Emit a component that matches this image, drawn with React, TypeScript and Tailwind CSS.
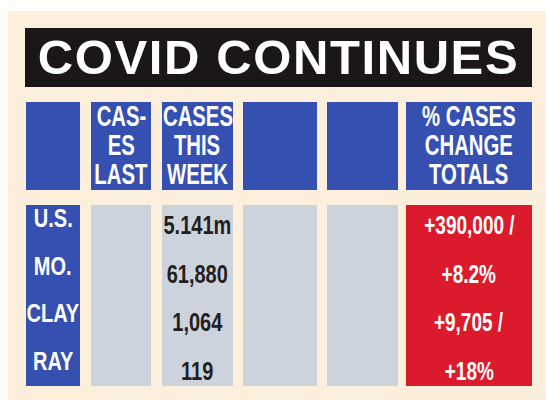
const sans = "font-['Liberation_Sans',Arial,sans-serif] font-bold";

const rows = [
  { label: 'U.S.', cases: '5.141m', change: '+390,000 /' },
  { label: 'MO.', cases: '61,880', change: '+8.2%' },
  { label: 'CLAY', cases: '1,064', change: '+9,705 /' },
  { label: 'RAY', cases: '119', change: '+18%' },
];

const cols = ['w-[54px]', 'w-[60px]', 'w-[71px]', 'w-[74px]', 'w-[71px]', 'w-[126px]'];

// condensed look: Liberation Sans squeezed horizontally
function Narrow({ children, scale }: { children: string; scale: string }) {
  return <span className={`inline-block whitespace-nowrap ${scale}`}>{children}</span>;
}

function HeaderCell({ w, lines }: { w: string; lines?: string[] }) {
  return (
    <div className={`${w} bg-[#3650b2] flex flex-col items-center justify-center pb-[2px] text-white text-[29px] leading-[29px] ${sans}`}>
      {lines?.map((l) => (
        <Narrow key={l} scale="scale-x-[0.7]">{l}</Narrow>
      ))}
    </div>
  );
}

export default function App() {
  return (
    <div className="w-[546px] h-[400px] bg-[#fffdf9] overflow-hidden">
      <div className="ml-[8px] mt-[11px] w-[538px] h-[389px] bg-[#fcf0dc] pl-[17px] pr-[14px] pt-[17px]">
        <div className="h-[59px] w-[507px] bg-[#1b1717] flex items-center justify-center">
          <h1 className={`${sans} text-white text-[49px] leading-none tracking-[1.6px]`}>COVID CONTINUES</h1>
        </div>

        <div className="mt-[15px] ml-[1px] flex h-[88px]">
          <HeaderCell w={cols[0]} />
          <div className="w-[11px]" />
          <HeaderCell w={cols[1]} lines={['CAS-', 'ES', 'LAST']} />
          <div className="w-[11px]" />
          <HeaderCell w={cols[2]} lines={['CASES', 'THIS', 'WEEK']} />
          <div className="w-[10px]" />
          <HeaderCell w={cols[3]} />
          <div className="w-[10px]" />
          <HeaderCell w={cols[4]} />
          <div className="w-[8px]" />
          <HeaderCell w={cols[5]} lines={['% CASES', 'CHANGE', 'TOTALS']} />
        </div>

        <div className={`mt-[15px] ml-[1px] flex h-[181px] text-[25px] leading-[26px] ${sans}`}>
          <div className={`${cols[0]} bg-[#3650b2] text-white flex flex-col gap-[21.5px] items-center`}>
            {rows.map((r) => (
              <Narrow key={r.label} scale="scale-x-[0.8]">{r.label}</Narrow>
            ))}
          </div>
          <div className="w-[11px]" />
          <div className={`${cols[1]} bg-[#cdd3dd]`} />
          <div className="w-[11px]" />
          <div className={`${cols[2]} bg-[#cdd3dd] text-[#231f20] flex flex-col gap-[22.5px] pt-[7px] items-center`}>
            {rows.map((r) => (
              <Narrow key={r.label} scale="scale-x-[0.8]">{r.cases}</Narrow>
            ))}
          </div>
          <div className="w-[10px]" />
          <div className={`${cols[3]} bg-[#cdd3dd]`} />
          <div className="w-[10px]" />
          <div className={`${cols[4]} bg-[#cdd3dd]`} />
          <div className="w-[8px]" />
          <div className={`${cols[5]} bg-[#db1b2c] text-white flex flex-col gap-[22.5px] pt-[7px] items-center`}>
            {rows.map((r) => (
              <Narrow key={r.label} scale="scale-x-[0.76]">{r.change}</Narrow>
            ))}
          </div>
        </div>
      </div>
    </div>
  );
}
